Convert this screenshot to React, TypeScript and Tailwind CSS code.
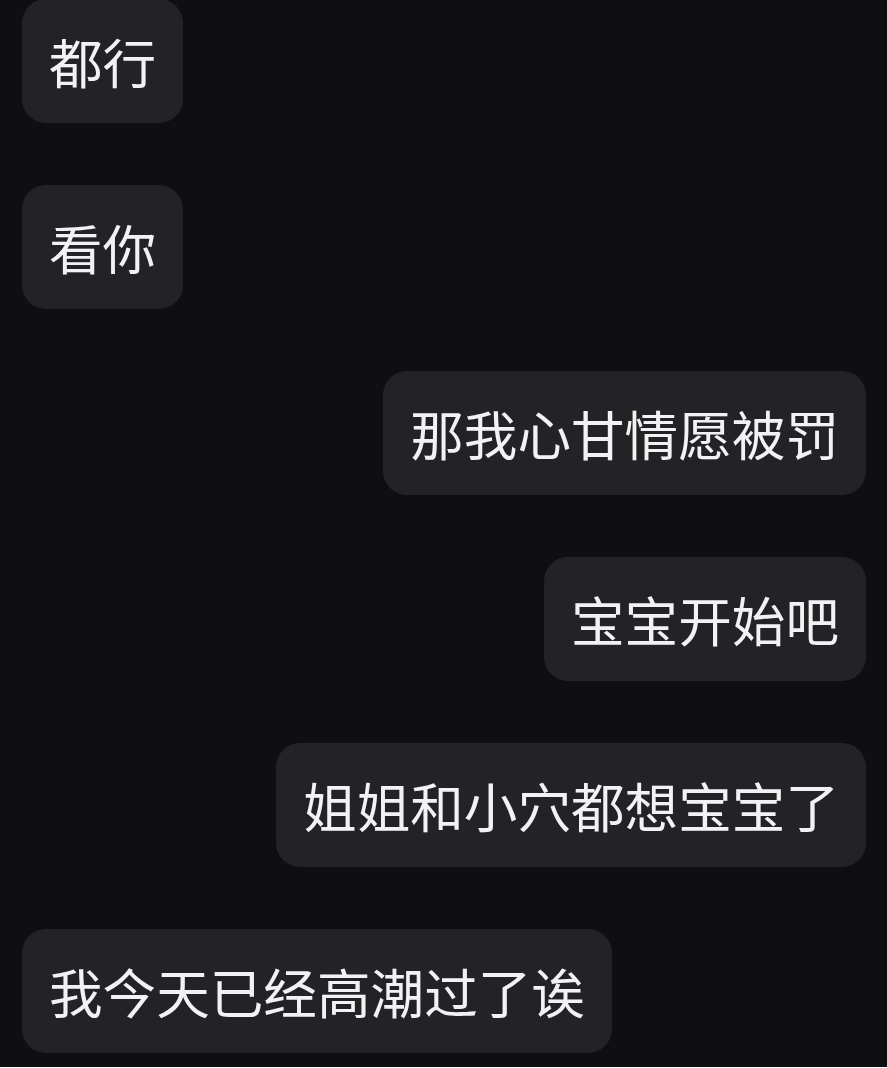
const messages: { text: string; mine: boolean }[] = [
  { text: "都行", mine: false },
  { text: "看你", mine: false },
  { text: "那我心甘情愿被罚", mine: true },
  { text: "宝宝开始吧", mine: true },
  { text: "姐姐和小穴都想宝宝了", mine: true },
  { text: "我今天已经高潮过了诶", mine: false },
];

export default function App() {
  return (
    <div
      className="w-[887px] h-[1068px] overflow-hidden bg-[#0f0f11] px-[21px] pt-0 flex flex-col gap-[62px] -mt-px"
      style={{ fontFamily: '"Noto Sans CJK SC", "Noto Sans", sans-serif' }}
    >
      {messages.map((m, i) => (
        <div key={i} className={m.mine ? "flex justify-end" : "flex justify-start pl-px"}>
          <div className="h-[124px] flex items-center px-[27px] rounded-[24px] bg-[#232326] text-[#f2f2f4] text-[53.6px] leading-none whitespace-nowrap">
            {m.text}
          </div>
        </div>
      ))}
    </div>
  );
}
